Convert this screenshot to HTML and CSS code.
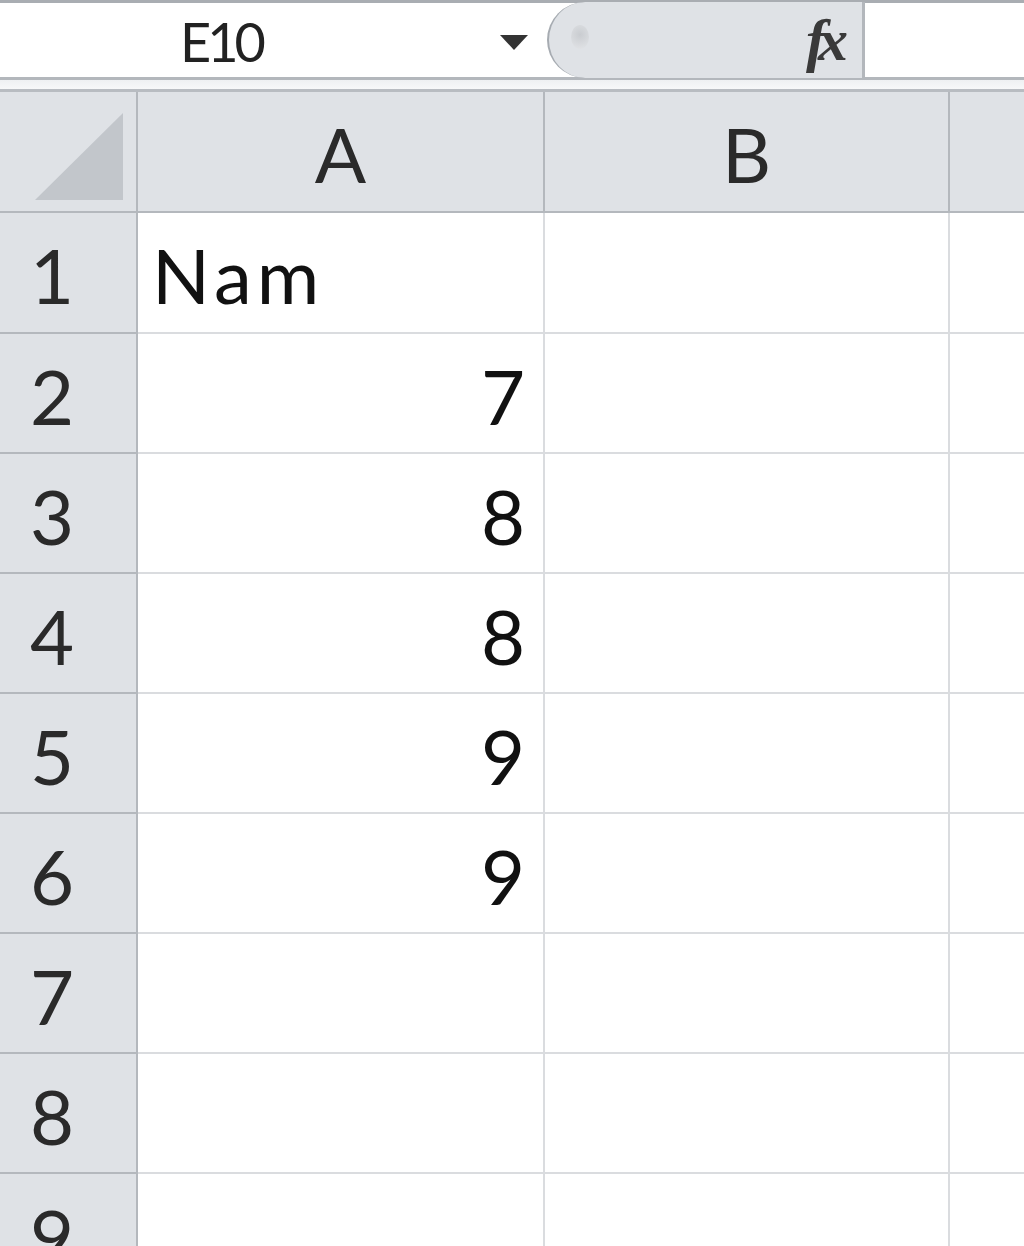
FILE: index.html
```html
<!DOCTYPE html>
<html lang="en">

<head>
    <meta charset="UTF-8">
    <meta name="viewport" content="width=device-width, initial-scale=1.0">
    <title>Sheet</title>
    <link rel="stylesheet" href="styles.css">
</head>

<body>
    <!-- 名称框和编辑栏 -->
    <div class="formula-bar">
        <div class="name-box">
            <span class="name">E10</span>
            <span class="arrow"></span>
        </div>
        <div class="fx-box">
            <span class="knob"></span>
            <span class="fx">fx</span>
        </div>
        <div class="input"></div>
    </div>
    <div class="sep"></div>

    <!-- 表格 -->
    <div class="sheet">
        <div class="corner">
            <svg width="137" height="120" viewBox="0 0 137 120">
                <polygon points="35,108 123,21 123,108" fill="#c2c6cb" />
            </svg>
        </div>
        <div class="col-head">A</div>
        <div class="col-head">B</div>
        <div class="col-head last"></div>

        <div class="row-head">1</div>
        <div class="cell text">Nam</div>
        <div class="cell"></div>
        <div class="cell last"></div>

        <div class="row-head">2</div>
        <div class="cell num">7</div>
        <div class="cell"></div>
        <div class="cell last"></div>

        <div class="row-head">3</div>
        <div class="cell num">8</div>
        <div class="cell"></div>
        <div class="cell last"></div>

        <div class="row-head">4</div>
        <div class="cell num">8</div>
        <div class="cell"></div>
        <div class="cell last"></div>

        <div class="row-head">5</div>
        <div class="cell num">9</div>
        <div class="cell"></div>
        <div class="cell last"></div>

        <div class="row-head">6</div>
        <div class="cell num">9</div>
        <div class="cell"></div>
        <div class="cell last"></div>

        <div class="row-head">7</div>
        <div class="cell"></div>
        <div class="cell"></div>
        <div class="cell last"></div>

        <div class="row-head">8</div>
        <div class="cell"></div>
        <div class="cell"></div>
        <div class="cell last"></div>

        <div class="row-head">9</div>
        <div class="cell"></div>
        <div class="cell"></div>
        <div class="cell last"></div>
    </div>
</body>

</html>
```

FILE: styles.css
```css
* {
    margin: 0;
    padding: 0;
    box-sizing: border-box;
}

html,
body {
    height: 100%;
    overflow: hidden;
}

body {
    background: #fff;
    font-family: Lato, "Open Sans", sans-serif;
    color: #1a1a1a;
}

/* 编辑栏 */
.formula-bar {
    display: flex;
    height: 80px;
    border-top: 3px solid #a9adb2;
    border-bottom: 3px solid #b3b7bc;
}

.name-box {
    width: 547px;
    display: flex;
    align-items: center;
    background: #fff;
}

.name {
    margin-left: 180px;
    font-size: 54px;
    color: #222;
    letter-spacing: -4px;
    margin-top: 2px;
}

.arrow {
    margin-left: 238px;
    margin-top: 4px;
    width: 0;
    height: 0;
    border-left: 14px solid transparent;
    border-right: 14px solid transparent;
    border-top: 15px solid #333;
}

.fx-box {
    width: 318px;
    display: flex;
    align-items: center;
    background: #dfe2e6;
    border-radius: 40px 0 0 40px;
    border-left: 2px solid #a6abb1;
    border-right: 3px solid #b3b7bc;
    margin-top: -1px;
    margin-bottom: -1px;
}

.knob {
    width: 18px;
    height: 24px;
    margin-left: 22px;
    margin-top: -6px;
    border-radius: 50%;
    background: radial-gradient(circle at 50% 40%, #c9ccd0, #e3e5e8);
}

.fx {
    margin-left: auto;
    margin-right: 22px;
    font-family: "Liberation Serif", serif;
    font-style: italic;
    font-weight: bold;
    font-size: 60px;
    color: #3a3a3a;
    letter-spacing: -8px;
}

.input {
    flex: 1;
    background: #fff;
}

.sep {
    height: 12px;
    background: linear-gradient(#eef0f2, #f7f8f9);
    border-bottom: 3px solid #b8bcc1;
}

/* 表格 */
.sheet {
    display: grid;
    grid-template-columns: 138px 407px 405px 1fr;
    grid-template-rows: 121px 121px repeat(8, 120px);
}

.corner,
.col-head,
.row-head {
    background: #dfe2e6;
    border-right: 2px solid #b4b8bd;
    border-bottom: 2px solid #b4b8bd;
}

.col-head {
    display: flex;
    align-items: center;
    justify-content: center;
    font-size: 76px;
    color: #2a2a2a;
    padding-top: 4px;
}

.col-head.last,
.cell.last {
    border-right: none;
}

.row-head {
    display: flex;
    align-items: center;
    padding-left: 30px;
    font-size: 76px;
    color: #2a2a2a;
    padding-top: 4px;
}

.cell {
    border-right: 2px solid #dadcdf;
    border-bottom: 2px solid #dadcdf;
    font-size: 76px;
    color: #111;
    display: flex;
    align-items: center;
    padding-top: 4px;
}

.cell.text {
    padding-left: 14px;
    letter-spacing: 5px;
}

.cell.num {
    justify-content: flex-end;
    padding-right: 18px;
}
```
